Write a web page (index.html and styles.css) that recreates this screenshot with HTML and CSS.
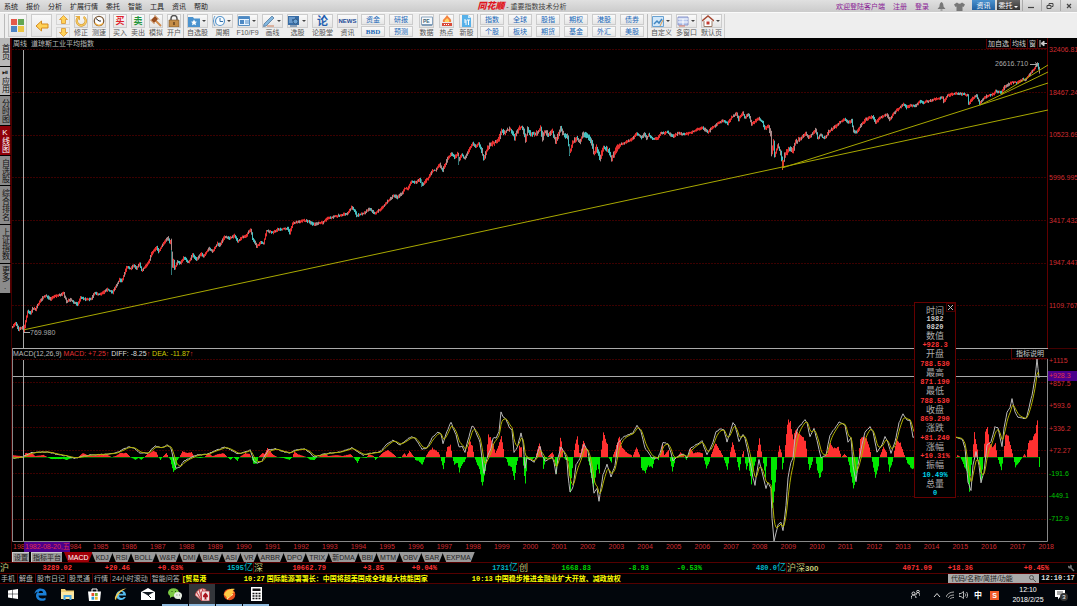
FILE: index.html
```
<!DOCTYPE html>
<html lang="zh-CN">

<head>
    <meta charset="UTF-8">
    <meta name="viewport" content="width=device-width, initial-scale=1.0">
    <title>同花顺 - 重要指数技术分析</title>
    <link rel="stylesheet" href="styles.css">
</head>

<body>
    <header class="titlebar">
        <nav class="menu">
            <a href="#">系统</a><a href="#">报价</a><a href="#">分析</a><a href="#">扩展行情</a><a href="#">委托</a><a href="#">智能</a><a href="#">工具</a><a href="#">资讯</a><a href="#">帮助</a>
        </nav>
        <div class="title"><b class="logo">同花顺</b> - 重要指数技术分析</div>
        <div class="account">
            <a href="#">欢迎登陆客户端</a><a href="#">注册</a><a href="#">登录</a>
            <svg width="9" height="9" viewBox="0 0 9 9"><path d="M4.500 0C6 1 6.500 2 6.500 4.500L8.500 7H.5L2.500 4.500C2.500 2 3 1 4.500 0M3.500 7.500h2v1h-2z" fill="#777"/></svg>
            <svg width="11" height="9" viewBox="0 0 11 9"><path d="M3 0.500Q5.500 3 8 .5L11 2.500 9.500 5 8.500 4.500V9H2.500V4.500L1.500 5 0 2.500z" fill="#777"/></svg>
        </div>
        <div class="window-buttons">
            <button class="info">资讯</button><button class="trade">委托 <i class="caret"></i></button>
            <button class="win" aria-label="最小化"><svg width="8" height="8" viewBox="0 0 8 8"><path d="M1 5.500h6" stroke="#444" stroke-width="1.200"/></svg></button>
            <button class="win" aria-label="还原"><svg width="8" height="8" viewBox="0 0 8 8"><path d="M1 3.500h4v3H1zM3 3V1.500h4v3H5.500" fill="none" stroke="#444"/></svg></button>
            <button class="win" aria-label="关闭"><svg width="8" height="8" viewBox="0 0 8 8"><path d="M2 2l4 4M6 2L2 6" stroke="#444" stroke-width="1.200"/></svg></button>
        </div>
    </header>

    <div class="toolbar">
        <div class="group">
            <button class="big home" aria-label="首页"><svg width="13" height="13" viewBox="0 0 13 13"><path d="M0 0h6v6H0z" fill="#e5594a"/><path d="M7 0h6v6H7z" fill="#63a653"/><path d="M0 7h6v6H0z" fill="#4e84c4"/><path d="M7 7h6v6H7z" fill="#ecc645"/></svg></button>
            <button class="big" aria-label="后退"><svg width="14" height="12" viewBox="0 0 14 12"><path d="M1 6l5.500-5v3H13v4H6.500v3z" fill="#ffd257" stroke="#d48a20"/></svg></button>
            <div class="updown">
                <button aria-label="上移"><svg width="9" height="9" viewBox="0 0 9 9"><path d="M4.500.5l4 4H6.500v4h-4v-4H.5z" fill="#ffd257" stroke="#d48a20" stroke-width=".7"/></svg></button>
                <button aria-label="下移"><svg width="9" height="9" viewBox="0 0 9 9"><path d="M4.500 8.500l4-4H6.500v-4h-4v4H.5z" fill="#ffd257" stroke="#d48a20" stroke-width=".7"/></svg></button>
            </div>
            <button class="tool"><span class="icon"><svg width="12" height="12" viewBox="0 0 12 12"><path d="M8.500 2A4.500 4.500 0 1 1 2.500 3.500" fill="none" stroke="#d79a32" stroke-width="2.400"/><path d="M8.500 2A4.500 4.500 0 1 1 2.500 3.500" fill="none" stroke="#f6cf68" stroke-width="1.200"/><path d="M0 1h5v4.500z" fill="#e6ad3f"/></svg></span>修正</button>
            <button class="tool"><span class="icon"><svg width="12" height="12" viewBox="0 0 12 12"><circle cx="6" cy="6" r="4.700" fill="#fff" stroke="#7d5a38" stroke-width="1.300"/><path d="M6 6L3 3.500M6 6h2" stroke="#222"/><path d="M2 8a4.500 4.500 0 0 0 8 0" fill="none" stroke="#efad40" stroke-width="1.500"/></svg></span>测速</button>
        </div>
        <div class="group trade-group">
            <button class="tool"><span class="icon buy">买</span>买入</button>
            <button class="tool"><span class="icon sell">卖</span>卖出</button>
            <button class="tool"><span class="icon"><svg width="12" height="12" viewBox="0 0 12 12"><path d="M5 5l6 6" stroke="#d08b4c" stroke-width="1.800"/><path d="M1 5l4-4 3 3-4 4z" fill="#9a4e20"/><path d="M0 4.500l4.500 4.500M4.500 0L9 4.500" stroke="#c78248"/></svg></span>模拟</button>
            <button class="tool"><span class="icon"><svg width="12" height="12" viewBox="0 0 12 12"><path d="M3 6V3.500a3 3 0 0 1 6 0V6" fill="none" stroke="#555" stroke-width="1.500"/><path d="M1 5h10v7H1z" fill="#c58d47" stroke="#74502c" stroke-width=".6"/><path d="M5.400 7h1.200v3H5.400z" fill="#4a3018"/></svg></span>开户</button>
        </div>
        <div class="group">
            <button class="tool wide"><span class="icon"><svg width="12" height="11" viewBox="0 0 12 11"><path d="M0 1h5l1 1.500h6V11H0z" fill="#4b93cf"/><path d="M6 3.500l1 2 2 .2-1.500 1.400.5 2.100L6 8.200 4 9.200l.5-2.100L3 5.700l2-.2z" fill="#fff"/></svg><i class="caret"></i></span>自选股</button>
            <button class="tool wide"><span class="icon"><svg width="12" height="12" viewBox="0 0 12 12"><circle cx="7" cy="6" r="4.500" fill="#f8fcff" stroke="#5a97cc" stroke-width="1.200"/><path d="M7 3v3.500h3" fill="none" stroke="#3572aa"/><path d="M2 1C0 4 0 8 2 11" fill="none" stroke="#5a97cc"/></svg><i class="caret"></i></span>周期</button>
            <button class="tool wide"><span class="icon"><svg width="12" height="10" viewBox="0 0 12 10"><path d="M.5.5h11v9H.5z" fill="#e8f4ff" stroke="#578fc3"/><path d="M1 1h10v2H1zM2 4h4v4H2z" fill="#4d89c4"/><path d="M7 5h4M7 7h4" stroke="#4d89c4"/></svg><i class="caret"></i></span>F10/F9</button>
            <button class="tool wide"><span class="icon"><svg width="12" height="12" viewBox="0 0 12 12"><path d="M1 9L9 1l2 2-8 8-2.500.5z" fill="#83b7df" stroke="#486f93" stroke-width=".7"/><path d="M4 11h7" stroke="#ce7d58"/></svg><i class="caret"></i></span>画线</button>
            <button class="tool wide"><span class="icon"><svg width="12" height="11" viewBox="0 0 12 11"><path d="M0 0h11v9H0z" fill="#386da6"/><path d="M1 2h6M1 4h3M1 6h4" stroke="#9cc7ef"/><circle cx="7.500" cy="5.500" r="2.500" fill="#6ea3d4" stroke="#345b85"/><path d="M2 10h7" stroke="#345b85"/></svg><i class="caret"></i></span>选股</button>
            <button class="tool wide"><span class="icon lun">论</span>论股堂</button>
            <button class="tool wide"><span class="icon news-icon">NEWS</span>资讯</button>
        </div>
        <div class="pairs money">
            <button>资金</button><button>研报</button><button><b>BBD</b></button><button>预测</button>
        </div>
        <div class="group data-group">
            <button class="tool"><span class="icon"><svg width="12" height="11" viewBox="0 0 12 11"><path d="M.5 1h11v8H.5z" fill="#f5f9fd" stroke="#8aa4bd"/><path d="M1 8h10v2H1z" fill="#7f9cb8"/><text x="2" y="7" class="pe">PE</text></svg></span>数据</button>
            <button class="tool"><span class="icon"><svg width="12" height="12" viewBox="0 0 12 12"><path d="M6 0c2 3 5 4 4 7H2C1 4 4 4 6 0" fill="#f4813d"/><path d="M6 3c1 1 3 2 2 4H4c-1-2 1-2 2-4" fill="#ffd464"/><path d="M1 8h10v3H1z" fill="#d94a38"/><path d="M3 9.500h6" stroke="#fff" stroke-dasharray="1 1"/></svg></span>热点</button>
            <button class="tool"><span class="icon"><svg width="11" height="12" viewBox="0 0 11 12"><path d="M1 0h6l3 3v9H1z" fill="#57b1e9"/><path d="M7 0v3h3" fill="#c6e7fb"/><path d="M3 5h2v5M6 5h3M7.500 5v5M3 7h2" fill="none" stroke="#fff"/></svg></span>新股</button>
        </div>
        <div class="pairs market">
            <button>指数</button><button>全球</button><button>股指</button><button>期权</button><button>港股</button><button>债券</button>
            <button>个股</button><button>板块</button><button>期货</button><button>基金</button><button>外汇</button><button>美股</button>
        </div>
        <div class="group view-group">
            <button class="tool wide"><span class="icon"><svg width="12" height="11" viewBox="0 0 12 11"><path d="M.5.5h11v10H.5z" fill="#d2e8fa" stroke="#69a2d2"/><path d="M2 8l3-3 2 2 3-4" fill="none" stroke="#4186c1" stroke-width="1.500"/><path d="M8 10l3-6" stroke="#dc994a"/></svg><i class="caret"></i></span>自定义</button>
            <button class="tool wide"><span class="icon"><svg width="12" height="11" viewBox="0 0 12 11"><path d="M1 1h10v8H1z" fill="#b9c9ed" stroke="#8b96ca"/><path d="M1 3h10M6 3v6M1 6h10" stroke="#fff"/><path d="M2 10h6" stroke="#d97663"/></svg><i class="caret"></i></span>多窗口</button>
            <button class="tool wide"><span class="icon"><svg width="12" height="12" viewBox="0 0 12 12"><path d="M2 6v5.500h8V6" fill="#fff" stroke="#9a7a66"/><path d="M0 6l6-5 6 5" fill="none" stroke="#a64a34" stroke-width="1.500"/><path d="M4.500 6.500h3v3h-3z" fill="#c3382e"/></svg><i class="caret"></i></span>默认页</button>
        </div>
    </div>

    <main class="main">
        <nav class="side">
            <button class="light">首页</button>
            <button class="light">⏯应用</button>
            <button>分时图</button>
            <button class="active">K线图</button>
            <button>自选股</button>
            <button class="tall">综合排名</button>
            <button class="tall">上证指数</button>
            <button>更多.</button>
        </nav>
        <div class="charts">
            <section class="panel price">
                <svg class="plot" id="pricePlot" viewBox="12 38 1036 310" preserveAspectRatio="none"></svg>
                <div class="axis" id="priceAxis"></div>
                <div class="caption"><span>周线</span><span>道琼斯工业平均指数</span></div>
                <div class="panel-buttons">
                    <button>加自选</button><button>均线</button><button>窗</button>
                    <button aria-label="收起"><svg width="8" height="7" viewBox="0 0 8 7"><path d="M1 0v7M2 3.500L5 1v5zM4 3.500h4" stroke="#ccc" fill="#ccc"/></svg></button>
                </div>
            </section>
            <section class="panel macd">
                <svg class="plot" id="macdPlot" viewBox="12 348 1036 194" preserveAspectRatio="none"></svg>
                <div class="axis" id="macdAxis"></div>
                <div class="caption"><span>MACD(12,26,9) <em class="red">MACD: +7.25↑</em> <em class="white">DIFF: -8.25<i>↑</i></em> <em class="yellow">DEA: -11.87<i>↑</i></em></span></div>
                <div class="panel-buttons"><button>指标说明</button></div>
                <div class="cursor-value">+928.3</div>
            </section>
            <div class="dates" id="dates"></div>
            <div class="tabs">
                <button class="plain">设置</button><button class="plain">指标平台</button><button class="active">MACD</button><button>KDJ</button><button>RSI</button><button>BOLL</button><button>W&amp;R</button><button>DMI</button><button>BIAS</button><button>ASI</button><button>VR</button><button>ARBR</button><button>DPO</button><button>TRIX</button><button>新DMA</button><button>BBI</button><button>MTM</button><button>OBV</button><button>SAR</button><button>EXPMA</button>
            </div>
            <aside class="databox">
                <button aria-label="关闭"><svg width="7" height="7" viewBox="0 0 7 7"><path d="M1 1l5 5M6 1L1 6" stroke="#bbb"/></svg></button>
                <h4>时间</h4><p class="white">1982</p><p class="white">0820</p>
                <h4>数值</h4><p>+928.3</p>
                <h4>开盘</h4><p>788.530</p>
                <h4>最高</h4><p>871.190</p>
                <h4>最低</h4><p>788.530</p>
                <h4>收盘</h4><p>869.290</p>
                <h4>涨跌</h4><p>+81.240</p>
                <h4>涨幅</h4><p>+10.31%</p>
                <h4>振幅</h4><p class="cyan">10.49%</p>
                <h4>总量</h4><p class="cyan">0</p>
            </aside>
        </div>
    </main>

    <div class="quotes">
        <div class="quote"><span class="name">沪</span><b>3289.02</b><b>+20.46</b><b>+0.63%</b><b class="vol">1595<span>亿</span></b></div>
        <div class="quote"><span class="name">深</span><b>10662.79</b><b>+3.85</b><b>+0.04%</b><b class="vol">1731<span>亿</span></b></div>
        <div class="quote down"><span class="name">创</span><b>1668.83</b><b>-8.93</b><b>-0.53%</b><b class="vol">480.0<span>亿</span></b></div>
        <div class="quote last"><span class="name">沪深<strong>300</strong></span><b>4071.09</b><b>+18.36</b><b>+0.45%</b>
            <svg width="8" height="8" viewBox="0 0 8 8"><path d="M3 3l4 4" stroke="#777" stroke-width="1.500"/><path d="M1 1.500l1.500 1L3.500 1 3 .5A2 2 0 1 1 1 3z" fill="#777"/></svg>
        </div>
    </div>

    <div class="news">
        <nav><a href="#">手机</a><a href="#">解盘</a><a href="#">股市日记</a><a href="#">股灵通</a><a href="#">行情</a><a href="#">24小时滚动</a><a href="#">智能问答</a></nav>
        <div class="ticker">
            <span class="old">[贸易港</span>
            <span class="first"><time>10:27</time> 国际能源署署长：中国将超美国成全球最大核能国家</span>
            <span><time>10:13</time> 中国稳步推进金融业扩大开放、减政放权</span>
        </div>
        <label class="search"><input type="text" aria-label="搜索" placeholder="代码/名称/简拼/功能"><svg width="7" height="7" viewBox="0 0 7 7"><circle cx="2.500" cy="2.500" r="2" fill="none" stroke="#555"/><path d="M4 4l3 3" stroke="#555"/></svg></label>
        <time class="clock">12:10:17</time>
    </div>

    <footer class="taskbar">
        <button aria-label="开始"><svg width="10" height="10" viewBox="0 0 10 10"><path d="M0 1.500l4.500-.7v4H0zM5 .7L10 0v4.800H5zM0 5.300h4.500v4L0 8.600zM5 5.300h5V10l-5-.7z" fill="#fff"/></svg></button>
        <button aria-label="Edge"><svg width="13" height="13" viewBox="0 0 13 13"><path d="M.5 6C1 2 4 .5 6.500.5c4 0 6 3 6 5.500v1.500h-8c0 3.500 5 3.500 7 2v2.500c-4 2-9.500.5-9.500-4.500 0-2 1.500-3.500 2.500-4C2.500 3.800 1 5 .5 6m4-1h4.500c0-3-4-3-4.500 0" fill="#1b80d8"/></svg></button>
        <button aria-label="文件夹"><svg width="13" height="12" viewBox="0 0 13 12"><path d="M0 1h4l1 1.500h8V11H0z" fill="#f0cf73"/><path d="M0 4h13v7H0z" fill="#fce6a1"/><path d="M2.500 12V7h8v5h-2V9h-4v3z" fill="#4aa5dd"/></svg></button>
        <button aria-label="商店"><svg width="13" height="13" viewBox="0 0 13 13"><path d="M4 4V1h5v3" fill="none" stroke="#fff"/><path d="M0 3.500h13L12 13H1z" fill="#fff"/><path d="M3.500 5h2.700v3H3.500z" fill="#e84d2d"/><path d="M7 5h2.700v3H7z" fill="#76ad32"/><path d="M3.500 8.700h2.700v3H3.500z" fill="#2199d5"/><path d="M7 8.700h2.700v3H7z" fill="#eab927"/></svg></button>
        <button aria-label="IE"><svg width="14" height="13" viewBox="0 0 14 13"><path d="M12 7.500H5c.3 3 4 3 4.500 1.500h2.300C9.500 14 2 12.500 2.200 7 2.500 1 12.300.5 12 7.500M5 5.700h4.200C9 3 5.300 3 5 5.700" fill="#55bbed"/><path d="M2 12C-2 11 5 0 13 .5c-2-.2-10 5-11 11.500" fill="#f3ce55"/></svg></button>
        <button aria-label="邮件"><svg width="14" height="12" viewBox="0 0 14 12"><path d="M0 4l7-4 7 4v8H0z" fill="#fff"/><path d="M1 4h12L7 7.500z" fill="#101820"/><path d="M7 7l3 3" stroke="#101820"/></svg></button>
        <button class="open" aria-label="微信"><svg width="14" height="12" viewBox="0 0 14 12"><ellipse cx="5.500" cy="4.500" rx="5.500" ry="4.300" fill="#7ac943"/><path d="M2 7v3l3-2" fill="#7ac943"/><ellipse cx="10" cy="7.500" rx="4" ry="3.500" fill="#e5eee2"/><path d="M11 10l2 2v-3" fill="#e5eee2"/><path d="M3.500 3.500h1M7 3.500h1" stroke="#264f1b"/><path d="M8.500 7h.8M11 7h.8" stroke="#555"/></svg></button>
        <button class="open active" aria-label="纸牌"><svg width="15" height="13" viewBox="0 0 15 13"><path d="M7 13L0 7l1.500-3zM7 13L1.500 4 4 1.500zM8 13L4 1.500 7.500.5zM8 13L7.500.5 11 1.500z" fill="#f6d5d3" stroke="#c94a4b" stroke-width=".8"/><rect x="6.500" y="3" width="8" height="10" rx="1" fill="#f3e3e1" stroke="#b93038" stroke-width=".8"/><path d="M10.500 4.500c3.500 3.500 3 5 .5 5l.8 2h-2.600l.8-2c-2.500 0-3-1.500.5-5" fill="#a8141e"/></svg></button>
        <button class="open" aria-label="同花顺"><svg width="13" height="13" viewBox="0 0 13 13"><circle cx="6.500" cy="6.500" r="5.800" fill="#e84f1b"/><path d="M1 7C2 2 8 0 12 1 8 3 10 4 12 4 8 5 9 7 10 8 7 6 6 9 4 12 4 9 3 8 1 7" fill="#ffcb45"/><path d="M4 11l6-5" stroke="#fff4a1"/></svg></button>
        <button class="open" aria-label="计算器"><svg width="11" height="14" viewBox="0 0 11 14"><path d="M0 0h11v14H0z" fill="#fff"/><path d="M1.500 1.500h8V4h-8z" fill="#111"/><path d="M1.500 6.500h8M1.500 9h8M1.500 11.500h8" stroke="#111" stroke-width="1.500" stroke-dasharray="2 1"/></svg></button>
        <div class="tray">
            <svg width="9" height="10" viewBox="0 0 9 10"><path d="M0 9c0-3 1-4 2.500-4S5 6 5 8M5 5c0-2 1-2.500 2-2.500S9 4 9 6" fill="none" stroke="#ddd"/><circle cx="2.500" cy="3.500" r="1.500" fill="none" stroke="#ddd"/><circle cx="7" cy="1.500" r="1.300" fill="none" stroke="#ddd"/></svg>
            <svg class="chevron" width="8" height="6" viewBox="0 0 8 6"><path d="M1 5l3-3.500L7 5" fill="none" stroke="#ddd"/></svg>
            <svg width="8" height="8" viewBox="0 0 8 8"><path d="M0 6C1 3 4 1 8 1M2 7c1-2 3-3 6-3M4 8c1-1 2-1.500 4-1.500" fill="none" stroke="#aaa"/></svg>
            <svg width="10" height="8" viewBox="0 0 10 8"><path d="M0 2.500h2L4.500.5v7L2 5.500H0z" fill="none" stroke="#ddd" stroke-width=".8"/><path d="M6 2.500c1 1 1 2 0 3M7.500 1c1.500 2 1.500 4 0 6" fill="none" stroke="#ddd" stroke-width=".8"/></svg>
            <b>中</b>
            <span class="sogou">S</span>
            <time><span>12:10</span><span>2018/2/25</span></time>
            <span class="notice"><svg width="10" height="10" viewBox="0 0 10 10"><path d="M0 0h10v7H5L3 9.500V7H0z" fill="#fff"/><path d="M2 2h6M2 4h6" stroke="#222" stroke-width=".8"/></svg><i>3</i></span>
        </div>
    </footer>
    <script src="script.js"></script>
</body>

</html>
```
FILE: styles.css
```
* {
    box-sizing: border-box;
}

body {
    margin: 0;
    height: 100vh;
    display: flex;
    flex-direction: column;
    overflow: hidden;
    background: #000;
    color: #bbb;
    font: 7px/9px "Liberation Sans", "Noto Sans CJK SC", sans-serif;
    white-space: nowrap;
}

button {
    margin: 0;
    padding: 0;
    border: 0;
    background: none;
    color: inherit;
    font: inherit;
    cursor: pointer;
}

a {
    color: inherit;
    text-decoration: none;
}

svg {
    display: block;
    flex: none;
}

em,
i {
    font-style: normal;
}

.red,
.white i,
.yellow i {
    color: #e03034;
}

.white {
    color: #ddd;
}

.yellow {
    color: #cccc00;
}

/* title bar */
.titlebar {
    height: 12px;
    flex: none;
    display: flex;
    align-items: center;
    background: linear-gradient(#e0e0e0, #cbcbcb);
    color: #222;
}

.menu {
    display: flex;
    gap: 8px;
    padding-left: 4px;
}

.title {
    margin: 0 auto;
    color: #444;
}

.logo {
    color: #e0141c;
    font-size: 9px;
    font-style: italic;
    font-weight: 900;
}

.account {
    display: flex;
    align-items: center;
    gap: 8px;
    margin-right: 7px;
    color: #8a1c96;
}

.window-buttons {
    display: flex;
    gap: 2px;
    height: 11px;
    align-self: flex-start;
}

.window-buttons .info,
.window-buttons .trade {
    width: 23px;
    height: 10px;
    background: linear-gradient(#4a92cf, #2160a0);
    color: #fff;
}

.window-buttons .trade {
    background: linear-gradient(#666, #333);
}

.trade .caret {
    border-top-color: #fff;
}

.win {
    width: 17px;
    display: grid;
    place-items: center;
    border-left: 1px solid #aaa;
}

.caret {
    display: inline-block;
    border: 2px solid transparent;
    border-top-color: #444;
    border-bottom: 0;
}

/* toolbar */
.toolbar {
    height: 26px;
    flex: none;
    display: flex;
    padding: 1px 0 0 4px;
    background: #eee;
    border-top: 1px solid #fafafa;
    color: #555;
}

.group {
    display: flex;
    gap: 4px;
    padding: 0 3px;
    border-left: 1px solid #bbb;
}

.trade-group {
    padding-right: 2px;
}

.view-group {
    border-right: 1px solid #ccc;
    padding-right: 2px;
}

.big {
    width: 21px;
    height: 23px;
    display: grid;
    place-items: center;
    border: 1px solid #ccc;
    background: linear-gradient(#f8f8f8, #e4e4e4);
}

.big.home {
    width: 19px;
}

.updown {
    display: grid;
    gap: 1px;
    width: 14px;
}

.updown button {
    height: 11px;
    display: grid;
    place-items: center;
    border: 1px solid #d5d5d5;
}

.tool {
    width: 14px;
    display: flex;
    flex-direction: column;
    align-items: center;
}

.tool.wide {
    width: 21px;
}

.icon {
    width: 100%;
    height: 14px;
    flex: none;
    display: flex;
    align-items: center;
    justify-content: center;
    gap: 2px;
    border: 1px solid #ccc;
    background: linear-gradient(#fafafa, #e4e4e4);
}

.wide .icon:has(.caret) {
    justify-content: space-between;
    padding-right: 1px;
}

.icon.buy,
.icon.sell,
.icon.lun {
    color: #e0202a;
    font-size: 9px;
    font-weight: bold;
}

.icon.sell {
    color: #22963c;
}

.icon.lun {
    color: #1e5eb0;
    font-size: 11px;
}

.icon.news-icon {
    color: #1d4a96;
    font-weight: bold;
    font-size: 6px;
}

.pe {
    font-size: 5px;
    font-weight: bold;
    fill: #467;
}

.pairs {
    display: grid;
    grid-template-columns: repeat(6, 24px);
    grid-auto-rows: 11px;
    gap: 1px 4px;
    padding: 0 3px 0 2px;
    border-left: 1px solid #bbb;
    color: #2068b8;
}

.pairs.money {
    grid-template-columns: repeat(2, 24px);
    padding: 0 3px 0 0;
    border: 0;
}

.pairs button {
    border: 1px solid #ccc;
    background: linear-gradient(#fafafa, #e6e6e6);
}

.pairs b {
    font-family: "Liberation Serif", serif;
}

.data-group {
    gap: 5px;
    border: 0;
}

.data-group .tool {
    width: 15px;
}

/* main area */
.main {
    flex: 1;
    min-height: 0;
    display: flex;
}

.side {
    width: 12px;
    flex: none;
    padding-right: 1px;
    background: #000;
    border-right: 1px solid #400;
}

.side button {
    display: flex;
    align-items: center;
    justify-content: center;
    width: 11px;
    height: 29px;
    margin-bottom: 1px;
    background: #8b8b8b;
    border-right: 1px solid #500;
    color: #111;
    font-size: 8px;
    writing-mode: vertical-rl;
    text-orientation: upright;
}

.side .light {
    height: 28px;
    background: #b8b8b8;
}

.side .tall {
    height: 38px;
}

.side .active {
    background: #900008;
    color: #fff;
}

.charts {
    position: relative;
    flex: 1;
    min-width: 0;
    display: flex;
    flex-direction: column;
}

.panel {
    position: relative;
    flex: 310 1 0;
    min-height: 0;
    display: flex;
}

.panel.macd {
    flex-grow: 194;
}

.plot {
    flex: 1 1 0;
    min-width: 0;
    height: 100%;
}

.axis {
    width: 29px;
    flex: none;
    display: flex;
    flex-direction: column;
    justify-content: space-between;
    overflow: hidden;
    color: #d02c30;
    padding: 7px 0 38px 1px;
}

.macd .axis {
    padding: 7px 0 19px 1px;
    border-top: 1px solid #400;
}

.axis .neg {
    color: #00c800;
}

.caption {
    position: absolute;
    top: 1px;
    left: 1px;
    display: flex;
    gap: 4px;
}

.panel-buttons {
    position: absolute;
    top: 1px;
    right: 29px;
    display: flex;
    color: #ccc;
}

.panel-buttons button {
    height: 10px;
    padding: 0 1px;
    border: 1px solid #500;
    border-top: 0;
    border-right: 0;
}

.macd .panel-buttons button {
    padding: 0 4px;
}

.cursor-value {
    position: absolute;
    top: 23px;
    right: 0;
    width: 29px;
    height: 10px;
    padding-left: 1px;
    background: #4a008c;
    color: #e0304c;
}

.price-label {
    fill: #aaa;
    font-size: 7px;
}

.dates {
    height: 10px;
    display: flex;
    padding-right: 10px;
    color: #d02c30;
}

.dates span {
    flex: 1 1 0;
    min-width: 0;
}

/* the cursor label covers the first years of the row */
.dates .first {
    flex: 0 0 12px;
    padding-left: 1px;
    overflow: hidden;
}

.dates .covered {
    flex: 0 0 23px;
}

.dates mark {
    flex: 0 0 45px;
    padding-left: 1px;
    background: #4a008c;
    color: #e0304c;
}

.tabs {
    height: 10px;
    display: flex;
}

.tabs button {
    height: 10px;
    padding: 0 4px;
    margin-right: -1px;
    background: #999;
    color: #222;
    clip-path: polygon(0 0, 100% 0, calc(100% - 4px) 100%, 4px 100%);
}

.tabs .plain {
    padding: 0 1px;
    margin: 0 2px 0 0;
    clip-path: none;
    border: 1px solid #ccc;
    border-width: 1px 0 0 1px;
    line-height: 8px;
}

.tabs .active {
    background: #a00008;
    color: #fff;
}

.databox {
    position: absolute;
    top: 264px;
    right: 121px;
    width: 42px;
    height: 196px;
    padding: 3px 0 0;
    display: flex;
    flex-direction: column;
    justify-content: space-between;
    border: 1px solid #600;
    background: #000;
    text-align: center;
}

.databox button {
    position: absolute;
    top: 0;
    right: 0;
    border: 1px solid #400;
}

.databox h4 {
    margin: 0;
    color: #aaa;
    font-size: 9px;
    line-height: 10px;
    font-weight: normal;
}

.databox p {
    margin: 0;
    color: #ff3434;
    font: bold 7px/8px "Liberation Mono", monospace;
}

.databox .white {
    color: #ccc;
    line-height: 7px;
}

.databox .cyan {
    color: #00d4e8;
}

/* index quotes */
.quotes {
    height: 12px;
    flex: none;
    display: grid;
    grid-template-columns: 254fr 265fr 268fr 290fr;
    border-top: 1px solid #500;
    border-bottom: 1px solid #500;
    color: #ff3434;
    line-height: 10px;
}

.quote {
    display: grid;
    grid-template-columns: 11px 61px 58px 53px 1fr;
    text-align: right;
    border-right: 1px solid #500;
}

.quote b {
    font-family: "Liberation Mono", "Noto Sans CJK SC", monospace;
}

.quote .name {
    color: #c8c878;
    font-size: 9px;
    text-align: left;
}

.quote strong {
    font-size: 8px;
}

.quote .vol {
    color: #00b8c8;
}

.vol span {
    font-size: 9px;
    font-weight: normal;
}

.quote.down {
    color: #00d800;
}

.quote.last {
    grid-template-columns: 40px 105px 41px 76px 1fr;
    border: 0;
}

.quote svg {
    margin: 1px 2px 0 auto;
}

/* news line */
.news {
    height: 10px;
    flex: none;
    display: flex;
    align-items: center;
    border-bottom: 1px solid #500;
}

.news nav {
    display: flex;
}

.news nav a {
    padding: 0 2px 0 1px;
    border-right: 1px solid #500;
}

.ticker {
    flex: 1;
    min-width: 0;
    overflow: hidden;
    display: flex;
    color: #ffff00;
    font-weight: bold;
}

.ticker .old {
    width: 61px;
}

.ticker .first {
    width: 228px;
}

.ticker time,
.clock {
    font-family: "Liberation Mono", monospace;
    font-weight: bold;
}

.search {
    display: flex;
    align-items: center;
    width: 91px;
    height: 9px;
    padding: 0 3px;
    background: #aaa;
}

.search input {
    flex: 1;
    min-width: 0;
    height: 9px;
    padding: 0;
    border: 0;
    outline: 0;
    background: none;
    font: inherit;
    color: #222;
}

.search input::placeholder {
    color: #222;
}

.clock {
    width: 38px;
    text-align: center;
    color: #ddd;
}

/* windows taskbar */
.taskbar {
    height: 22px;
    flex: none;
    display: flex;
    gap: 1px;
    background: #02060c;
    color: #fff;
}

.taskbar button {
    width: 26px;
    flex: none;
    display: grid;
    place-items: center;
    border-bottom: 2px solid transparent;
}

.taskbar button.open {
    border-bottom-color: #8cb8dc;
}

.taskbar button.active {
    background: #33363b;
}

.tray {
    margin-left: auto;
    display: flex;
    align-items: center;
    gap: 5px;
    padding-right: 12px;
}

.tray .chevron {
    margin-left: 8px;
}

.tray b {
    font-size: 8px;
}

.sogou {
    width: 9px;
    margin-left: 3px;
    background: #f05a28;
    text-align: center;
    font-weight: bold;
}

.tray time {
    width: 40px;
    margin-left: 4px;
    display: grid;
    line-height: 10px;
    text-align: center;
}

.notice {
    position: relative;
    margin-left: 2px;
}

.notice i {
    position: absolute;
    left: 5px;
    top: 3px;
    width: 8px;
    border-radius: 4px;
    background: #333;
    font-size: 6px;
    line-height: 8px;
    text-align: center;
}
```
FILE: script.js
```
// weekly closes, MACD bars and DIFF as x,y pairs in plot units
const close = `12,326 15,323 18,329 22,327 23,331 25,321 27,311 30,313 32,308 35,309 38,303 42,297 45,295 50,299 53,296 58,295 63,293 66,301 70,299 73,302 77,304 80,297 85,299 90,299 94,293 100,294 107,289 112,292 117,283 119,279 121,281 126,267 130,268 133,265 136,268 139,263 141,270 148,262 151,253 156,247 158,251 162,244 167,237 169,242 170,240 171,253 172,266 173,260 174,268 177,261 180,263 183,257 188,262 192,254 196,259 201,253 203,256 208,248 212,251 217,243 219,245 224,236 229,238 234,235 237,241 242,236 244,237 250,229 252,238 256,246 260,242 263,243 266,230 272,232 277,229 287,228 289,233 292,223 302,220 308,221 313,224 322,222 327,218 338,215 347,213 351,207 354,210 356,215 363,213 369,208 374,213 382,207 387,201 393,195 397,197 402,192 404,188 407,188 411,181 415,182 419,179 422,184 428,177 432,170 435,170 439,164 442,170 447,158 451,153 454,157 457,153 458,160 461,154 464,158 467,152 472,143 475,146 478,143 481,150 483,159 485,152 489,144 494,142 497,140 501,131 504,133 506,130 510,129 514,137 517,130 521,126 523,131 525,140 527,129 530,133 535,134 540,128 542,138 544,131 548,134 552,131 555,142 560,128 563,134 567,137 569,152 572,142 576,137 579,141 583,133 589,138 592,145 593,153 596,147 599,158 603,147 606,149 608,150 611,158 615,150 618,145 627,141 632,138 636,133 641,137 644,133 646,138 648,134 652,138 657,138 660,133 667,132 672,136 677,133 685,134 690,132 702,127 707,132 712,127 718,122 723,120 727,123 731,117 736,113 738,119 742,112 744,117 748,114 751,124 754,121 758,118 762,122 764,128 768,126 770,133 771,153 773,142 774,156 777,145 780,152 782,166 784,155 788,148 792,150 795,142 800,138 805,133 808,137 812,133 815,129 817,138 820,134 822,137 825,137 828,131 835,126 840,121 844,119 848,122 851,120 853,131 856,132 860,125 865,119 872,116 875,122 880,117 886,114 889,119 893,113 898,108 903,104 906,107 910,105 915,105 919,101 923,102 933,99 942,97 943,101 947,95 955,93 960,93 967,95 968,103 972,98 976,95 979,103 983,98 987,95 992,94 995,91 1001,92 1004,86 1011,82 1016,82 1022,79 1025,79 1029,74 1033,69 1037,63 1039,72`;

const bars = `12,2 20,1 23,0 25,4 31,4 35,1 43,2 47,0 50,-2 63,-2 66,-3 72,-1 78,0 82,4 87,2 90,1 100,2 106,3 111,0 115,1 120,4 126,4 130,0 135,-3 138,-1 141,-3 144,0 147,3 153,6 156,5 158,0 160,-3 162,0 166,4 168,0 170,-3 173,-16 175,-13 177,-3 179,0 182,6 187,4 191,5 194,0 200,-1 204,0 208,4 212,1 218,3 223,4 227,0 230,-3 233,0 237,-4 239,0 245,4 249,3 251,0 253,-7 256,-7 258,0 262,4 264,3 267,9 270,6 273,2 277,0 283,-1 289,-3 292,0 294,6 297,3 303,1 306,0 310,-3 314,-3 317,0 325,3 328,1 337,2 342,1 350,3 353,0 357,-6 360,0 366,-1 368,3 373,1 375,-3 378,0 383,5 388,7 393,3 396,0 400,-1 404,4 406,1 409,6 413,1 415,-3 418,-4 422,-8 425,0 428,5 432,9 438,5 440,0 443,-13 445,0 447,11 450,12 452,0 454,-8 457,-6 459,-15 462,-7 464,-5 466,0 468,11 469,17 472,11 474,0 477,-8 479,-12 482,-31 485,-15 486,0 488,24 492,15 495,4 497,8 501,22 503,8 504,0 506,-2 508,-9 511,-10 514,-25 516,-8 518,0 519,11 521,10 522,0 525,-28 527,-2 532,-2 535,0 536,4 539,14 541,6 542,0 543,-13 545,-3 547,0 552,5 554,0 556,-17 558,0 560,21 562,9 563,0 565,-3 568,-4 570,-35 572,-11 573,0 575,14 577,21 579,4 580,4 583,17 586,8 587,0 589,-9 593,-33 597,-8 599,-16 600,0 603,24 607,13 608,0 611,-6 612,0 615,8 619,22 621,12 623,8 627,4 631,2 632,0 636,10 638,5 640,0 641,-12 645,-16 648,-9 652,-11 654,-3 656,0 658,-3 659,0 662,12 664,2 668,7 669,0 672,-14 675,-2 677,0 680,5 683,2 686,-3 687,0 690,9 693,4 697,5 702,4 703,0 706,-11 709,-5 710,0 715,14 720,6 723,0 727,-13 729,0 732,16 735,4 736,0 739,-15 741,0 743,6 744,0 746,-13 748,-6 751,-28 753,-14 756,0 759,19 761,6 762,0 765,-20 767,0 770,0 772,-51 774,-38 777,0 779,11 781,5 782,-12 784,0 786,25 788,39 790,36 793,18 795,29 797,27 800,22 805,17 807,0 809,-14 812,-5 813,0 815,0 817,-13 819,-22 822,-14 823,0 827,3 830,15 833,9 838,10 841,0 844,3 847,0 849,-9 853,-33 856,-17 858,0 860,19 866,20 869,10 871,0 875,-21 878,-9 879,0 883,10 886,5 887,0 889,-15 892,-5 893,0 896,18 900,14 904,2 905,0 907,-6 912,-13 914,-9 916,0 953,0 955,-3 957,2 960,0 962,-5 967,-17 969,-34 971,-8 972,0 974,25 977,8 978,0 981,-24 983,0 985,28 987,30 989,15 992,10 995,14 997,0 1001,-13 1003,0 1005,24 1008,22 1010,12 1013,0 1015,-10 1019,-5 1022,0 1024,3 1026,0 1028,15 1032,18 1035,25 1037,37 1038,0 1039,-10`;

const diff = `12,458 23,457 30,453 38,452 48,452 56,454 66,456 74,458 80,457 90,455 108,454 116,453 122,450 128,447 134,448 140,453 148,453 155,446 161,448 167,445 171,448 174,461 176,468 180,467 184,461 190,458 197,455 208,454 214,451 220,449 225,447 231,450 238,454 245,452 250,450 254,461 257,463 262,461 268,450 276,449 284,452 290,453 295,450 304,449 309,452 314,457 320,455 330,453 340,452 352,448 356,451 363,455 372,453 380,452 386,445 393,440 400,445 405,441 411,437 415,438 422,449 427,448 432,438 438,432 441,434 443,444 446,434 451,422 453,428 456,435 459,447 462,446 465,452 468,440 472,426 474,427 477,435 480,442 483,467 484,474 487,458 491,448 493,438 496,438 499,432 501,412 503,417 506,419 509,427 512,430 514,452 517,448 521,433 523,442 525,468 527,458 534,462 537,455 540,446 542,455 545,461 552,457 554,462 556,474 558,458 561,447 564,452 567,460 568,475 570,492 573,487 576,465 580,458 584,444 588,452 591,468 594,493 597,488 599,501 603,475 607,464 611,477 615,465 618,443 623,437 630,434 633,433 637,425 641,432 645,448 648,452 652,458 658,458 661,450 663,442 668,444 671,453 673,461 677,457 683,454 687,458 690,449 697,444 702,441 704,447 707,455 712,445 716,432 720,429 724,430 727,442 730,433 733,423 735,425 739,442 743,434 745,438 747,448 750,462 753,478 755,485 758,465 759,460 762,472 766,488 768,483 771,488 772,518 774,541 778,525 781,522 783,531 786,505 788,478 791,462 793,458 795,438 798,428 805,420 807,422 810,437 814,428 818,445 821,458 826,455 830,435 835,428 839,422 845,425 848,442 851,438 853,465 856,482 858,465 862,445 865,432 870,427 873,432 877,452 882,445 885,437 887,440 891,453 895,442 899,423 903,414 907,420 910,420 913,437 955,437 962,439 965,448 968,482 971,491 973,465 976,452 979,465 981,483 984,472 987,445 991,442 995,427 998,428 1002,447 1004,428 1007,412 1010,408 1012,399 1015,412 1018,417 1026,419 1028,412 1032,395 1035,378 1037,359 1039,378`;

const LAST_X = 1039;
let seed = 7;

function random() {
    seed = (seed * 16807) % 2147483647;
    return seed / 2147483647;
}

// one value for each pixel column
function sample(text) {
    const points = text.split(' ').map(p => p.split(',').map(Number));
    const out = {};
    let i = 0;
    for (let x = 12; x <= LAST_X; x++) {
        while (i < points.length - 2 && points[i + 1][0] < x) i++;
        const [x1, y1] = points[i];
        const [x2, y2] = points[i + 1];
        out[x] = y1 + (y2 - y1) * (x - x1) / (x2 - x1);
    }
    return out;
}

function path(d, color, extra = '') {
    return `<path d="${d}" fill="none" stroke="${color}" ${extra}/>`;
}

function grid(rows) {
    return path(rows.map(y => `M12 ${y}.5H1048`).join(''), '#3c0000', 'stroke-dasharray="2 1" shape-rendering="crispEdges"');
}

function drawPrice() {
    const y = sample(close);
    const candles = { '#e83030': '', '#44c0c0': '', '#a88888': '' };
    for (let x = 12; x <= LAST_X; x++) {
        const prev = y[x - 1] || y[x];
        const rough = (x > 480 && x < 620) || (x > 764 && x < 800) ? 2 : 1;
        const top = Math.min(prev, y[x]) - random() * 1.4 * rough;
        const bottom = Math.max(prev, y[x]) + 1 + random() * 1.4 * rough;
        const roll = random();
        let color = y[x] + random() * 1.2 - 0.8 < prev ? '#e83030' : '#44c0c0';
        if (roll < 0.3) color = '#a88888';
        candles[color] += `M${x + 0.5} ${top.toFixed(1)}V${bottom.toFixed(1)}`;
    }
    let svg = grid([49, 92, 135, 177, 220, 263, 305]);
    svg += path('M1047.5 38V348', '#600000');
    for (const color in candles) svg += path(candles[color], color);
    svg += path('M171.5 250V275M421.5 180V187M458.500 156V165M569.500 145V155', '#307878');
    svg += path('M782.500 160V170', '#d05020');
    svg += path('M23 330L1048 110M782 168L980 105L1048 83M980 105L1048 72M1001 94L1048 65', '#a8a800');
    svg += path('M23.500 50V348M24 332.500H30M1030 64.500H1037M1035 62.500L1037.500 64.500L1035 66.500', '#aaa');
    svg += '<text class="price-label" x="30" y="335">769.980</text><text class="price-label" x="995" y="66">26616.710</text>';
    document.getElementById('pricePlot').innerHTML = svg;
}

function drawMacd() {
    const bar = sample(bars);
    const fast = sample(diff);
    let up = '', down = '', fastLine = '', slowLine = '';
    let slow = fast[12];
    for (let x = 12; x <= LAST_X; x++) {
        const h = bar[x] * (0.9 + random() * 0.15);
        if (h > 0.3) up += `M${x + 0.5} 457V${(457 - h).toFixed(1)}`;
        if (h < -0.3) down += `M${x + 0.5} 457V${(457 - h).toFixed(1)}`;
        slow += (fast[x] - slow) * 0.33;
        fastLine += `${x},${(fast[x] + random() - 0.5).toFixed(1)} `;
        slowLine += `${x},${slow.toFixed(1)} `;
    }
    let svg = grid([359, 382, 405, 427, 450, 473, 496, 519]);
    svg += path('M12 457.500H1040', '#006000');
    svg += path(up, '#ff3030') + path(down, '#00e800');
    svg += `<polyline points="${fastLine}" fill="none" stroke="#bbb"/>`;
    svg += `<polyline points="${slowLine}" fill="none" stroke="#b0b000"/>`;
    svg += path('M23.500 360V542M12 376.500H1048M12 348.500H1048', '#aaa');
    svg += path('M12.500 348V541.500H1047.500V358', '#888');
    document.getElementById('macdPlot').innerHTML = svg;
}

function fillAxis(id, labels) {
    document.getElementById(id).innerHTML = labels
        .map(t => `<span class="${t[0] === '-' ? 'neg' : ''}">${t}</span>`).join('');
}

function fillDates() {
    let html = '<span class="first">1982</span><mark>1982-08-20,五</mark><span class="covered">984</span>';
    for (let year = 1985; year <= 2018; year++) html += `<span>${year}</span>`;
    document.getElementById('dates').innerHTML = html;
}

drawPrice();
drawMacd();
fillAxis('priceAxis', ['32406.81', '18467.24', '10523.69', '5996.995', '3417.432', '1947.447', '1109.767']);
fillAxis('macdAxis', ['+1115', '+857.5', '+593.6', '+336.2', '+72.27', '-191.6', '-449.1', '-712.9']);
fillDates();
```
